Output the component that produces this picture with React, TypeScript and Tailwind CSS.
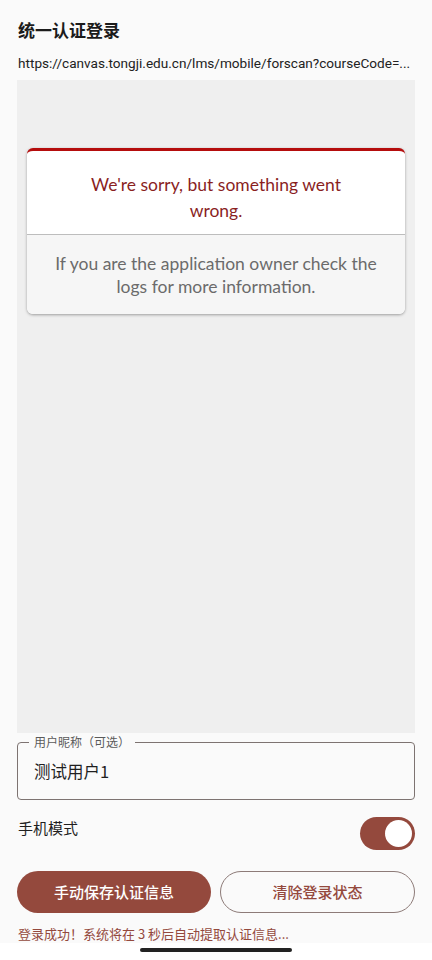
const cjk = { fontFamily: '"Noto Sans CJK SC", "Noto Sans", sans-serif' };
const latin = { fontFamily: 'Lato, "Noto Sans", sans-serif' };

function ErrorCard() {
  return (
    <div
      className="mx-[10px] mt-[67px] overflow-hidden rounded-[6px] border-t-[3px] border-[#b50d0d] bg-white shadow-[0_1px_3px_rgba(0,0,0,0.35)]"
      style={latin}
    >
      <div className="px-[48px] pt-[21px] pb-[10px] text-center text-[17.5px] leading-[26px] text-[#8a1f1f]">
        We're sorry, but something went wrong.
      </div>
      <div className="border-t border-[#bdbdbd] bg-[#f6f6f6] px-5 pt-[17px] pb-[16px] text-center text-[17.5px] leading-[23px] text-[#6b6b6b]">
        If you are the application owner check the logs for more information.
      </div>
    </div>
  );
}

function Switch() {
  return (
    <div className="flex h-[33px] w-[55px] items-center justify-end rounded-full bg-[#94493d] pr-[3px]">
      <div className="h-[27px] w-[27px] rounded-full bg-white" />
    </div>
  );
}

export default function App() {
  return (
    <div className="flex h-[960px] w-[432px] flex-col bg-[#fafafa]" style={cjk}>
      <div className="flex flex-1 flex-col px-[17px]">
        <h1 className="mt-[18px] h-[23px] pl-[1px] text-[17px] leading-[23px] font-bold text-[#1b1b1b]">
          统一认证登录
        </h1>
        <p
          className="mt-[13px] pl-[1px] text-[13.6px] leading-[18px] whitespace-nowrap text-[#222]"
          style={{ fontFamily: 'Roboto, "Noto Sans", sans-serif' }}
        >
          https://canvas.tongji.edu.cn/lms/mobile/forscan?courseCode=...
        </p>

        <div className="mt-[8px] h-[653px] bg-[#efefef] pt-px">
          <ErrorCard />
        </div>

        <div className="relative mt-[9px] h-[58px] rounded-[4px] border border-[#7d7371]">
          <span className="absolute -top-[9px] left-[11px] bg-[#fafafa] px-[5px] text-[12px] leading-[16px] text-[#5a5a5a]">
            用户昵称（可选）
          </span>
          <div className="flex h-full items-center pl-[16px] text-[16.5px] text-[#1f1f1f]">
            测试用户1
          </div>
        </div>

        <div className="mt-[17px] flex items-start justify-between">
          <span className="mt-[1px] pl-[1px] text-[15px] leading-[20px] text-[#1f1f1f]">手机模式</span>
          <Switch />
        </div>

        <div className="mt-[21px] flex gap-[9px]">
          <button className="h-[42px] w-[194px] rounded-full bg-[#94493d] text-[15px] font-medium text-white">
            手动保存认证信息
          </button>
          <button className="h-[42px] flex-1 rounded-full border border-[#8d7b78] text-[15px] font-medium text-[#94493d]">
            清除登录状态
          </button>
        </div>

        <p className="mt-[12px] pl-[1px] text-[13px] leading-[18px] text-[#94493d]">
          登录成功！系统将在 3 秒后自动提取认证信息...
        </p>
      </div>

      <div className="flex h-[17px] justify-center bg-white pt-[5px]">
        <div className="h-[4px] w-[152px] rounded-full bg-[#222]" />
      </div>
    </div>
  );
}
